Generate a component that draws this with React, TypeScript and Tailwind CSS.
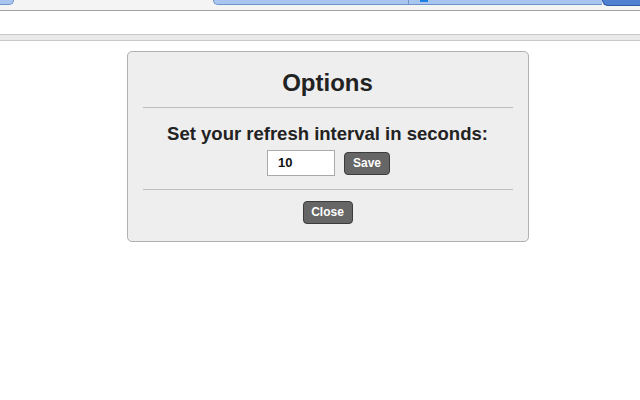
import React, { useState } from 'react';

// top strip: bottom edge of a browser window (tabs cut off)
const BrowserStrip: React.FC = () => (
  <div className="h-[11px] bg-[#f4f4f4] border-b border-[#a3a3a3] flex items-start">
    <div className="w-[14px] h-[5px] bg-[#a8c6ef] border-b border-r border-[#6f93c7] rounded-br-[6px]" />
    <div className="w-[199px]" />
    <div className="w-[195px] h-[5px] bg-[#a8c6ef] border-b border-l border-[#6f93c7] rounded-bl-[6px]" />
    <div className="w-[194px] h-[5px] bg-[#a8c6ef] border-b border-l border-[#6f93c7] relative">
      <div className="absolute left-[11px] top-0 w-[8px] h-[2px] bg-[#1f7fe0]" />
    </div>
    <div className="flex-1 h-[6px] bg-[#4f7fcf] border-b border-l border-[#2c5aa5] rounded-bl-[6px]" />
  </div>
);

export default function App() {
  const [interval, setInterval] = useState<string>('10');

  return (
    <div className="w-[640px] h-[400px] bg-white overflow-hidden font-['Liberation_Sans',Arial,sans-serif]">
      <BrowserStrip />
      <div className="h-[23px]" />
      <div className="h-[7px] bg-[#e9e9e9] border-t border-b border-[#c9c9c9]" />

      <div className="flex justify-center pt-[10px]">
        <div className="w-[402px] h-[191px] ml-[15px] bg-[#eeeeee] border border-[#b0b0b0] rounded-[5px] px-[15px] flex flex-col">
          <h1 className="text-[24px] font-bold text-[#222] text-center leading-none pt-[19px] pb-[12px] border-b border-[#bdbdbd]">
            Options
          </h1>

          <div className="flex flex-col items-center border-b border-[#bdbdbd] pb-[13px]">
            <h3 className="text-[18.5px] font-bold text-[#222] leading-none pt-[17px]">
              Set your refresh interval in seconds:
            </h3>
            <div className="flex items-center gap-[9px] mt-[6px] ml-[2px]">
              <input
                type="text"
                value={interval}
                onChange={(e) => setInterval(e.target.value)}
                className="w-[68px] h-[26px] bg-white border border-[#aaa] px-[10px] text-[13px] font-bold text-[#111] outline-none"
              />
              <button className="h-[23px] w-[46px] mt-[1px] bg-[#666] border border-[#3c3c3c] rounded-[4px] text-white text-[12px] font-bold leading-none">
                Save
              </button>
            </div>
          </div>

          <div className="flex justify-center pt-[11px]">
            <button className="h-[23px] w-[50px] bg-[#666] border border-[#3c3c3c] rounded-[4px] text-white text-[12px] font-bold leading-none">
              Close
            </button>
          </div>
        </div>
      </div>
    </div>
  );
}
